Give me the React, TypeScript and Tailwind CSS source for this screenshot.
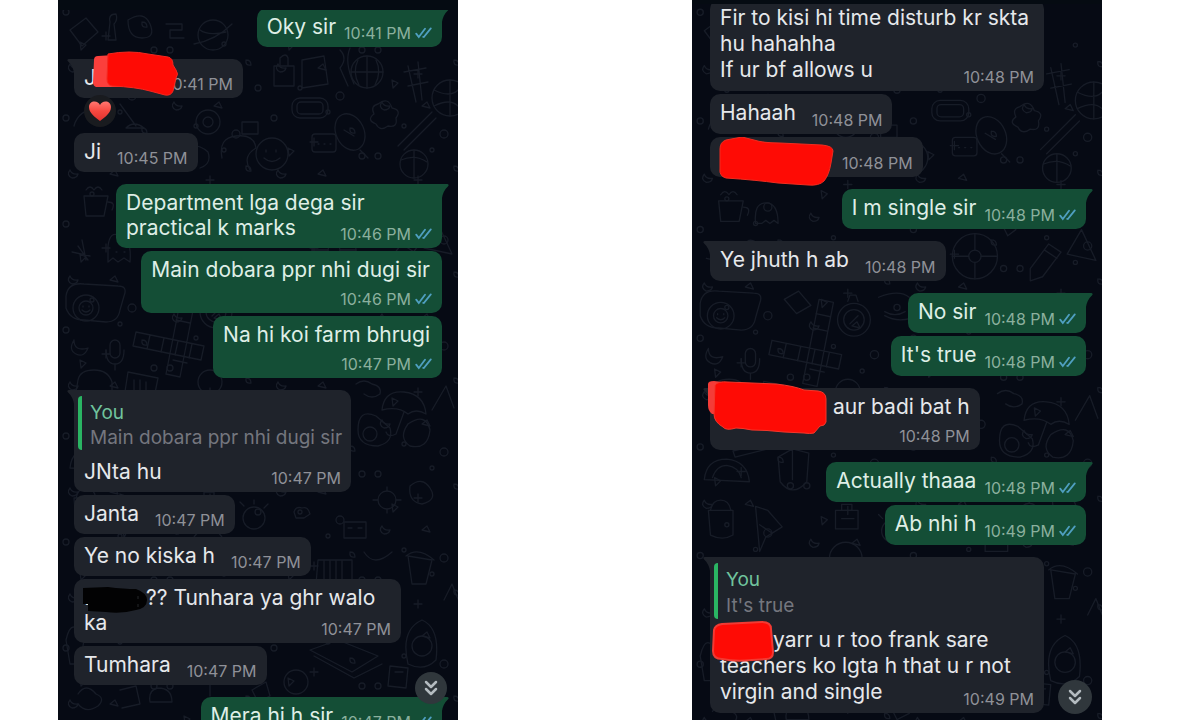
import React from 'react';
import clsx from 'clsx';
import { ChevronsDown } from 'lucide-react';

type Message = {
  from: 'me' | 'them';
  time: string;
  text: React.ReactNode;
  first?: boolean;
  layout?: 'inline' | 'stacked' | 'wide';
  width?: string;
  quote?: string;
  cover?: React.ReactNode;
  reaction?: boolean;
};

const Gap = ({ className }: { className: string }) => (
  <span className={clsx('inline-block h-4 align-baseline', className)} />
);

const leftMessages: Message[] = [
  { from: 'me', first: true, text: 'Oky sir', time: '10:41 PM' },
  {
    from: 'them',
    first: true,
    text: <>J<Gap className="w-[54px]" /></>,
    time: '10:41 PM',
    reaction: true,
    cover: (
      <svg className="absolute -top-2 left-4 z-10" width="92" height="52" viewBox="0 0 92 52" fill="none">
        <path d="M4 9Q4 5 8 5L24 4L30 36L6 36Q3 35 3 31Z" fill="#fb3f3c" />
        <path d="M18 3Q40 -1 58 3L78 6Q83 7 83 14L86 19Q89 23 86 27L83 40Q81 45 75 44L60 40Q46 36 22 35Q17 34 17 28Z" fill="#fe0b05" stroke="#f5281f" strokeWidth="1" />
      </svg>
    ),
  },
  { from: 'them', text: 'Ji', time: '10:45 PM' },
  {
    from: 'me',
    first: true,
    text: <>Department lga dega sir<br />practical k marks</>,
    time: '10:46 PM',
    layout: 'wide',
    width: 'w-[326px]',
  },
  { from: 'me', text: 'Main dobara ppr nhi dugi sir', time: '10:46 PM', layout: 'stacked' },
  { from: 'me', text: 'Na hi koi farm bhrugi', time: '10:47 PM', layout: 'stacked' },
  {
    from: 'them',
    first: true,
    text: 'JNta hu',
    time: '10:47 PM',
    layout: 'wide',
    width: 'w-[277px]',
    quote: 'Main dobara ppr nhi dugi sir',
  },
  { from: 'them', text: 'Janta', time: '10:47 PM' },
  { from: 'them', text: 'Ye no kiska h', time: '10:47 PM' },
  {
    from: 'them',
    text: <>.<Gap className="w-14" />?? Tunhara ya ghr walo<br />ka</>,
    time: '10:47 PM',
    layout: 'wide',
    width: 'w-[327px]',
    cover: (
      <svg className="absolute top-2 left-2 z-10" width="68" height="28" viewBox="0 0 68 28">
        <path d="M1 1L26 0Q42 2 54 2Q65 6 65 13Q65 21 54 23Q40 27 24 25L6 24L6 17L1 17Z" fill="#020203" />
        <path d="M56 9v3M56 17v3" stroke="#24262b" strokeWidth="1" />
      </svg>
    ),
  },
  { from: 'them', text: 'Tumhara', time: '10:47 PM' },
  { from: 'me', first: true, text: 'Mera hi h sir', time: '10:47 PM' },
];

const rightMessages: Message[] = [
  {
    from: 'them',
    text: <>Fir to kisi hi time disturb kr skta<br />hu hahahha<br />If ur bf allows u</>,
    time: '10:48 PM',
    layout: 'wide',
    width: 'w-[334px]',
  },
  { from: 'them', text: 'Hahaah', time: '10:48 PM' },
  {
    from: 'them',
    text: <Gap className="w-[106px]" />,
    time: '10:48 PM',
    cover: (
      <svg className="absolute top-0 left-2 z-10" width="118" height="50" viewBox="0 0 118 50">
        <path d="M2 12Q2 5 8 3L24 0L36 3Q45 6 62 6L104 8Q115 9 115 14L113 26Q111 38 106 44Q101 49 90 48L60 46Q38 43 8 41Q1 39 2 32Z" fill="#fe0b05" stroke="#f02d20" strokeWidth="1" />
      </svg>
    ),
  },
  { from: 'me', first: true, text: 'I m single sir', time: '10:48 PM' },
  { from: 'them', first: true, text: 'Ye jhuth h ab', time: '10:48 PM' },
  { from: 'me', first: true, text: 'No sir', time: '10:48 PM' },
  { from: 'me', text: "It's true", time: '10:48 PM' },
  {
    from: 'them',
    first: true,
    text: <><Gap className="w-[113px]" />aur badi bat h</>,
    time: '10:48 PM',
    layout: 'stacked',
    cover: (
      <svg className="absolute -top-2 -left-1 z-10" width="122" height="56" viewBox="0 0 122 56">
        <path d="M2 4Q2 1 8 1L16 2L16 34L6 34Q2 31 2 25Z" fill="#f43c38" />
        <path d="M9 5Q12 1 22 2L70 4Q88 6 98 10L112 11Q120 12 120 19L120 42Q119 46 114 46L108 53Q104 54 98 53L78 52Q60 50 46 50Q36 48 30 48Q20 51 17 47Q8 42 8 34Z" fill="#fe0b05" stroke="#f5372b" strokeWidth="1" />
      </svg>
    ),
  },
  { from: 'me', first: true, text: 'Actually thaaa', time: '10:48 PM' },
  { from: 'me', text: 'Ab nhi h', time: '10:49 PM' },
  {
    from: 'them',
    first: true,
    text: <><Gap className="w-[53px]" />yarr u r too frank sare<br />teachers ko lgta h that u r not<br />virgin and single</>,
    time: '10:49 PM',
    layout: 'wide',
    width: 'w-[334px]',
    quote: "It's true",
    cover: (
      <svg className="absolute top-16 left-0.5 z-10" width="62" height="46" viewBox="0 0 62 46">
        <path d="M2 9Q3 4 10 3L50 1Q59 1 59 8L61 31Q61 38 54 38L40 39Q24 41 10 38Q1 38 1 30Z" fill="#fe0b05" stroke="#f23a33" strokeWidth="2" />
      </svg>
    ),
  },
];

const Ticks = () => (
  <svg className="mb-1 ml-1 shrink-0" width="17" height="12" viewBox="0 0 17 12" fill="none" stroke="#4f9fc0" strokeWidth="1.8" strokeLinecap="round">
    <path d="M1.2 6.600L3.800 10L10 1.800" />
    <path d="M8.200 9.900L8.800 10L15.800 1.400" />
  </svg>
);

const Heart = () => (
  <span className="absolute -bottom-[29px] left-2.5 z-10 flex h-8 w-8 items-center justify-center rounded-full bg-[#191b1f]">
    <svg width="24" height="22" viewBox="0 0 24 22">
      <defs>
        <linearGradient id="heart" x1="0" y1="0" x2="0" y2="1">
          <stop offset="0" stopColor="#ff7770" />
          <stop offset="0.5" stopColor="#f5473f" />
          <stop offset="1" stopColor="#e0322f" />
        </linearGradient>
      </defs>
      <path d="M12 21C7 17 1 13 1 7C1 3.500 3.500 1.500 6.500 1.500C9 1.500 11 3 12 5C13 3 15 1.500 17.500 1.500C20.500 1.500 23 3.500 23 7C23 13 17 17 12 21Z" fill="url(#heart)" />
    </svg>
  </span>
);

const Tail = ({ mine }: { mine: boolean }) => (
  <svg
    className={clsx('absolute top-0', mine ? '-right-[7px] text-[#144e36]' : '-left-[7px] -scale-x-100 text-[#1f232b]')}
    width="8"
    height="14"
    viewBox="0 0 8 14"
  >
    <path d="M0 0H6.500Q8.200 0.400 7.300 2Q2 7 1 14H0Z" fill="currentColor" />
  </svg>
);

const Bubble = ({ message, compact }: { message: Message; compact: boolean }) => {
  const { from, time, text, first, layout = 'inline', width, quote, cover, reaction } = message;
  const mine = from === 'me';

  return (
    <li
      className={clsx(
        'relative max-w-full rounded-[10px] pt-1.5 pb-1 pl-2.5',
        layout === 'stacked' && mine ? 'pr-3' : 'pr-2.5',
        mine ? 'self-end bg-[#144e36]' : 'self-start bg-[#1f232b]',
        first && (mine ? 'rounded-tr-none' : 'rounded-tl-none'),
        first ? 'mt-3' : 'mt-[3px]',
        reaction && 'mb-8',
        width
      )}
    >
      {first && <Tail mine={mine} />}
      {cover}
      {quote && (
        <blockquote
          className={clsx(
            '-ml-1.5 rounded-l-[4px] border-l-4 border-[#2ab563] pt-1 pl-2 text-[19px] whitespace-nowrap',
            compact ? 'mb-[9px] leading-[25px]' : 'mb-2 leading-[26px]'
          )}
        >
          <cite className="block text-[#70c39d] not-italic">You</cite>
          <p className="text-[#74767e]">{quote}</p>
        </blockquote>
      )}
      <div
        className={clsx(
          'flex',
          layout === 'stacked' ? 'flex-col' : 'items-end justify-between',
          layout === 'stacked' && (compact ? 'gap-[7px]' : 'gap-1.5'),
          layout === 'inline' && (mine ? 'gap-2' : 'gap-4')
        )}
      >
        <p
          className={clsx(
            'text-[21px] whitespace-nowrap',
            compact ? 'leading-[25px]' : 'leading-[26px]',
            layout !== 'stacked' && 'pb-1',
            mine ? 'text-[#dfeee6]' : 'text-[#e6e8eb]'
          )}
        >
          {text}
        </p>
        <div className={clsx('flex items-end', layout === 'wide' && '-ml-20', layout === 'stacked' && (mine ? '-mr-0.5 self-end' : 'self-end'))}>
          <time className={clsx('text-base leading-5 whitespace-nowrap', mine ? 'text-[#8bb09e]' : 'text-[#8f9198]')}>
            {time}
          </time>
          {mine && <Ticks />}
        </div>
      </div>
      {reaction && <Heart />}
    </li>
  );
};

const Wallpaper = () => (
  <svg
    className="absolute inset-0 h-full w-full"
    viewBox="0 0 400 720"
    preserveAspectRatio="xMidYMin slice"
    fill="none"
    stroke="#171c27"
    strokeWidth="1.300"
    strokeLinecap="round"
    strokeLinejoin="round"
    aria-hidden="true"
  >
    <defs>
      <g id="bits">
        <circle cx="8" cy="12" r="3" />
        <circle cx="62" cy="6" r="2" />
        <circle cx="96" cy="50" r="3" />
        <circle cx="34" cy="88" r="2" />
        <circle cx="74" cy="96" r="4" />
        <path d="M22 42l6 3-5 5zM52 68l5-4 3 6zM84 22q5 0 5 5q-6 1-5-5M12 64q-4 5 2 8q5 0 6-4q-6 1-8-4M48 32v8M44 36h8" />
      </g>
    </defs>
    {[0, 1, 2, 3].map((x) =>
      [0, 1, 2, 3, 4, 5, 6].map((y) => <use key={`${x}-${y}`} href="#bits" x={x * 104} y={y * 106 + (x % 2) * 38} />)
    )}
    {/* camera, phone, planet */}
    <path d="M12 30l16-12 12 14-16 14zM52 22q-2-8 6-8q2 6-2 10l2 16h-8zM70 20q16-10 22 4t-8 14t-14-18zM108 24h16v6h-12v8h14" />
    <circle cx="155" cy="35" r="15" />
    <path d="M136 44q22-4 38-20M142 30q8 6 26 2" />
    {/* plants and boxes */}
    <path d="M216 66h20v20h-20zM222 66v-8q6-6 8 0v8M244 60l22-4 4 28-26 4zM282 50q8 8 0 18l8 18M292 48q-6 14 4 36M350 66l8 36M360 62l4 38M346 72l22-4M350 86l20-4" />
    <circle cx="309" cy="72" r="16" />
    <path d="M309 56v32M300 60q-6 12 1 25M318 60q6 12-1 25M293 72h32" />
    <circle cx="392" cy="98" r="18" />
    <path d="M392 80v36M376 90q16 8 24 0M376 106q16-8 24 0" />
    <rect x="234" y="98" width="36" height="20" rx="8" />
    <rect x="239" y="102" width="26" height="12" rx="4" />
    <circle cx="150" cy="122" r="12" />
    <circle cx="150" cy="122" r="5" />
    <path d="M62 104l16 22M68 128q8-8 18 0zM40 108q-20 2-24 18M184 122h16v12h-16z" />
    <ellipse cx="292" cy="132" rx="14" ry="19" transform="rotate(-25 292 132)" />
    <path d="M286 130l10 6M302 150l8 8M320 104q10-8 14 4q10 2 4 10q2 10-8 8q-8 6-12-2q-10-4-2-10q-4-8 4-10M340 146l34-34M346 150l32-32" />
    <rect x="254" y="134" width="24" height="18" rx="3" />
    <path d="M260 144h1M266 144h1M272 144h1" />
    <circle cx="214" cy="154" r="16" />
    <path d="M208 150v2M218 150v2M206 158q8 7 16 0M164 158q-4-20 14-22t20 12q-14 8-6 22" />
    <circle cx="356" cy="164" r="14" />
    <path d="M343 160q14-6 26 2M356 150v28M120 150q16-10 30 2q4 12-8 16" />
    {/* tea pot, ghost, cactus */}
    <path d="M26 196h24l-4 20h-18zM28 190q4-6 8 0q4-6 8 0M50 202q8 0 4 8M62 218q-2-20 10-20t12 20l-4-3-4 3-4-3-4 3zM20 246l10 14M14 252l18 4M24 240l4 20M50 262v-16q2-16 12-10q12 2 10 26l-6-4-6 4-5-4zM58 252h1M66 252h1" />
    <path d="M8 296q2-14 18-12l34 2q10 0 6 10l-4 14q-2 12-14 12l-22-2q-14 0-18-12z" />
    <circle cx="28" cy="308" r="13" />
    <circle cx="28" cy="308" r="7" />
    <path d="M25 306v1M31 306v1M24 310q4 4 8 0" />
    {/* crossword */}
    <path d="M78 332l68 14-3 14-68-14zM92 335l-3 14M106 338l-3 14M120 341l-3 14M134 344l-3 14M124 292l14 3-16 82-14-3zM121 306l14 3M118 320l14 3M115 360l14 3" />
    <circle cx="158" cy="312" r="16" />
    <circle cx="158" cy="312" r="10" />
    <path d="M152 294l2-6h6l2 6M154 316l8-8M90 292l14-8 12 14-14 8zM182 290q20-8 30 0l10 4v14q-20 8-34 0M188 304q10 6 20 0" />
    <rect x="52" y="340" width="10" height="18" rx="5" />
    <path d="M48 350q0 14 9 14t9-14M57 364v6M16 340q0 12 14 8q-4 10-12 6t-2-14" />
    {/* wheel and pencil */}
    <circle cx="276" cy="250" r="22" />
    <circle cx="276" cy="250" r="6" />
    <path d="M276 228v16M276 256v16M254 250h16M282 250h16M330 262l18-24 12 8-18 24-12 4zM344 244l12 8M366 248l14-24 14 30zM304 222l8-6 4 8-8 6z" />
    {/* desk things */}
    <path d="M20 380q2-10 16-10t18 12v10H18zM70 372l30 6-4 20H66zM76 380v10M82 380v12M88 382v10" />
    <circle cx="152" cy="382" r="12" />
    <path d="M298 384q8-6 16 0q10 2 8 10q-8 6-16 0M324 410q2-20 22-18t22 22q-10-6-18 0q-10-8-26-4M346 412l-8 22M338 434q-8 4-10-2M300 430q0-22 18-14l14 12q4 14-12 18q-20 0-20-16" />
    <circle cx="312" cy="434" r="7" />
    <path d="M350 424q18-12 22 6q-2 20-20 16q-12-8-2-22M374 410l14-24 8 22M40 440l40-10 2 6-40 10zM12 468q2-20 22-20q20 2 22 22zM20 466q4-12 14-12q12 2 14 12" />
    <path d="M84 446l14-8 16 4-2 28q-14 16-26 0zM98 438v30M16 498h24v24q-10 6-22 0zM18 498q2-10 10-10t10 10M62 494l12 4 14 16-16 10-6 14zM66 512l12 8M140 498h22v18h-22zM146 498v-6h10v6M146 506h12" />
    <circle cx="150" cy="545" r="16" />
    <circle cx="196" cy="518" r="11" />
    <path d="M182 502l4 4M196 500v4M210 504l-4 4M236 512q2-6 8-4q6-2 8 6l-6 4h-8zM286 522h22v16h-22zM290 528h4M300 528h4" />
    <circle cx="329" cy="500" r="9" />
    <path d="M329 487v4M329 509v4M315 500h5M338 500h5M352 486q12-10 20 2t-8 16q-14-2-12-18M260 560h34v24h-36zM266 560v24M272 560v24M278 560v24M284 560v24M350 556l24 4-6 24h-14zM348 556q12-10 28 4" />
    <path d="M306 552q10 16 28 0M350 664q-8-34 14-44q18 8 14 40q-12 12-28 4M332 610h1M386 600l8-16 8 20" />
    <circle cx="364" cy="646" r="10" />
    <path d="M252 650l42 22 26-16-40-16zM256 656l40 22 28-14M332 666l18 2-2 20-18-2zM337 672h8M20 694q8-12 18 0q10 4 2 12q-12 8-20-2M62 690l16-4 4 18-18 4M100 688q14 0 14 14h-22q-2-12 8-14M152 676v20M146 684h12" />
    <circle cx="238" cy="682" r="12" />
    <path d="M194 690l14-8 4 14-12 6zM8 640q6-26 18 0l-4 24h-10z" />
  </svg>
);

const ChatPanel = ({
  label,
  messages,
  className,
  barClass,
  listClass,
  buttonClass,
  compact = false,
}: {
  label: string;
  messages: Message[];
  className: string;
  barClass: string;
  listClass: string;
  buttonClass: string;
  compact?: boolean;
}) => (
  <section aria-label={label} className={clsx('relative overflow-hidden bg-[#060a14]', className)}>
    <Wallpaper />
    <ul className={clsx('relative flex flex-col pr-4', listClass)}>
      {messages.map((message, index) => (
        <Bubble key={index} message={message} compact={compact} />
      ))}
    </ul>
    <div className={clsx('absolute inset-x-0 top-0 z-20 bg-[#050b12]', barClass)} />
    <button
      type="button"
      aria-label="Scroll to latest"
      className={clsx('absolute z-20 flex items-center justify-center rounded-full bg-[#30373c] text-[#b4bbc0]', buttonClass)}
    >
      <ChevronsDown size={24} strokeWidth={2.5} />
    </button>
  </section>
);

const App = () => {
  return (
    <main className="grid h-screen grid-cols-[58fr_400fr_234fr_410fr_98fr] overflow-hidden bg-white font-[Inter,sans-serif]">
      <ChatPanel
        label="Chat, part one"
        messages={leftMessages}
        className="col-start-2"
        barClass="h-2.5"
        listClass="-mt-1 pl-4"
        buttonClass="right-[11px] bottom-4 h-8 w-8"
        compact
      />
      <ChatPanel
        label="Chat, part two"
        messages={rightMessages}
        className="col-start-4"
        barClass="h-1"
        listClass="-mt-1 pl-[18px]"
        buttonClass="right-2.5 bottom-1.5 h-[34px] w-[34px]"
      />
    </main>
  );
};

export default App;
